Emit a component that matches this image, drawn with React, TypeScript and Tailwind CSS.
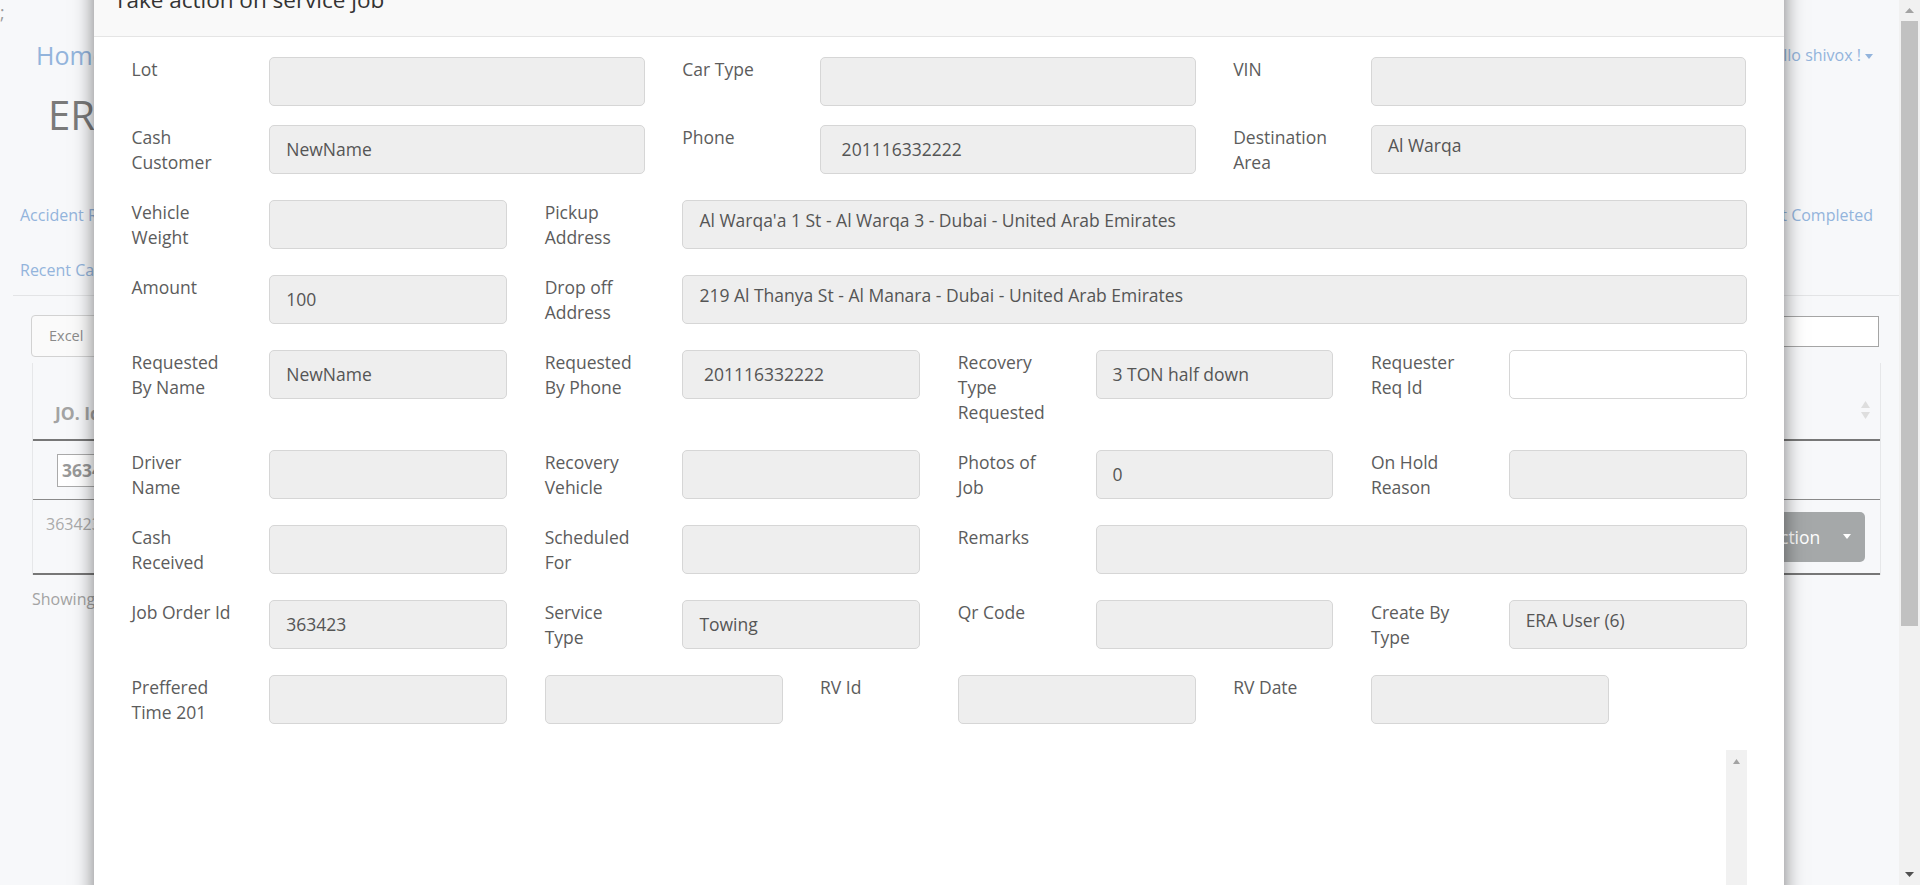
import React from "react";

type Field = {
  lines?: string[];
  value?: string;
  top?: boolean;
  white?: boolean;
  w: string;
};

const rows: Field[][] = [
  [
    { lines: ["Lot"], w: "w-1/3" },
    { lines: ["Car Type"], w: "w-1/3" },
    { lines: ["VIN"], w: "w-1/3" },
  ],
  [
    { lines: ["Cash", "Customer"], value: "NewName", w: "w-1/3" },
    { lines: ["Phone"], value: " 201116332222", w: "w-1/3" },
    { lines: ["Destination", "Area"], value: "Al Warqa", top: true, w: "w-1/3" },
  ],
  [
    { lines: ["Vehicle", "Weight"], w: "w-1/4" },
    {
      lines: ["Pickup", "Address"],
      value: "Al Warqa'a 1 St - Al Warqa 3 - Dubai - United Arab Emirates",
      top: true,
      w: "w-3/4",
    },
  ],
  [
    { lines: ["Amount"], value: "100", w: "w-1/4" },
    {
      lines: ["Drop off", "Address"],
      value: "219 Al Thanya St - Al Manara - Dubai - United Arab Emirates",
      top: true,
      w: "w-3/4",
    },
  ],
  [
    { lines: ["Requested", "By Name"], value: "NewName", w: "w-1/4" },
    { lines: ["Requested", "By Phone"], value: " 201116332222", w: "w-1/4" },
    { lines: ["Recovery", "Type", "Requested"], value: "3 TON half down", w: "w-1/4" },
    { lines: ["Requester", "Req Id"], white: true, w: "w-1/4" },
  ],
  [
    { lines: ["Driver", "Name"], w: "w-1/4" },
    { lines: ["Recovery", "Vehicle"], w: "w-1/4" },
    { lines: ["Photos of", "Job"], value: "0", w: "w-1/4" },
    { lines: ["On Hold", "Reason"], w: "w-1/4" },
  ],
  [
    { lines: ["Cash", "Received"], w: "w-1/4" },
    { lines: ["Scheduled", "For"], w: "w-1/4" },
    { lines: ["Remarks"], w: "w-1/2" },
  ],
  [
    { lines: ["Job Order Id"], value: "363423", w: "w-1/4" },
    { lines: ["Service", "Type"], value: "Towing", w: "w-1/4" },
    { lines: ["Qr Code"], w: "w-1/4" },
    { lines: ["Create By", "Type"], value: "ERA User (6)", top: true, w: "w-1/4" },
  ],
  [
    { lines: ["Preffered", "Time 201"], w: "w-1/4" },
    { w: "w-1/6" },
    { lines: ["RV Id"], w: "w-1/4" },
    { lines: ["RV Date"], w: "w-1/4" },
  ],
];

function FieldCol({ f }: { f: Field }) {
  return (
    <div className={`${f.w} shrink-0 px-[18.75px]`}>
      <div className="flex items-start">
        {f.lines && (
          <div className="w-[137.75px] shrink-0 whitespace-nowrap pb-[6.25px] text-[17.5px] leading-[25px] text-[#5c5c5c]">
            {f.lines.map((l) => (
              <div key={l}>{l}</div>
            ))}
          </div>
        )}
        <div
          className={`h-[49px] min-w-0 flex-1 overflow-hidden whitespace-pre rounded-[5px] border border-[#d6d6d6] px-[16px] text-[17.5px] leading-[25px] text-[#555] ${
            f.top ? "pt-[7px]" : "pt-[11px]"
          } ${f.white ? "bg-white" : "bg-[#eeeeee]"}`}
        >
          {f.value}
        </div>
      </div>
    </div>
  );
}

function Caret({ className = "" }: { className?: string }) {
  return (
    <svg width="8" height="5" viewBox="0 0 8 5" className={className}>
      <path d="M0 0h8L4 5z" fill="currentColor" />
    </svg>
  );
}

function Page() {
  return (
    <div className="w-[1899px] shrink-0">
      <div className="h-[40px] text-[17.5px] leading-[25px] text-[#9a9a9a]">;</div>

      <div className="flex h-[50px] items-start justify-between pl-[36px] pr-[26px]">
        <span className="text-[25px] leading-[30px] text-[#93b4dc]">Home</span>
        <span className="mt-[3px] flex items-center gap-[4px] text-[16px] leading-[25px] text-[#93b4dc]">
          Hello shivox !
          <Caret className="mt-[2px]" />
        </span>
      </div>

      <div className="mt-[2.5px] h-[44px] pl-[48px] text-[40px] leading-[44px] text-[#7a7a7a]">
        ERA Service Jobs
      </div>

      <div className="mt-[66.5px] flex h-[25px] items-start justify-between pl-[20px] pr-[26px] text-[16px] leading-[25px] text-[#93b4dc]">
        <span>Accident Reports</span>
        <span>All Jobs</span>
        <span>Open Jobs</span>
        <span>In Progress</span>
        <span>Completed</span>
        <span>Not Completed</span>
      </div>

      <div className="mt-[30px] h-[25px] pl-[20px] text-[16px] leading-[25px] text-[#93b4dc]">
        Recent Cases
      </div>

      <div className="ml-[13px] mt-[12px] border-t border-[#e3e4e6]" />

      <div className="mt-[19px] flex items-start justify-between pl-[31px] pr-[20px]">
        <div className="h-[42px] rounded-[4px] border border-[#d2d2d2] bg-[#fafafa] px-[17px] text-[14.5px] leading-[40px] text-[#8a8a8a]">
          Excel
        </div>
        <div className="mt-[1px] h-[31px] w-[260px] border border-[#a5a5a5] bg-white" />
      </div>

      <div className="ml-[32px] mr-[18px] mt-[6px] border-x border-[#e6e7e9]">
        <div className="flex h-[78px] items-start justify-between border-b-[2px] border-[#777] pl-[22px] pr-[10px] pt-[37.7px]">
          <span className="text-[17.5px] font-bold leading-[25px] text-[#a3a3a3]">JO. Id</span>
          <svg width="9" height="18" viewBox="0 0 9 18">
            <path d="M4.5 0L9 7H0z" fill="#dedede" />
            <path d="M4.5 18L9 11H0z" fill="#dedede" />
          </svg>
        </div>
        <div className="h-[59px] border-b border-[#8a8a8a] pl-[24px] pt-[13px]">
          <div className="h-[33px] w-[120px] border border-[#aaa] bg-white pl-[4px] text-[17.5px] font-bold leading-[31px] text-[#999]">
            363423
          </div>
        </div>
        <div className="flex h-[75px] items-start justify-between border-b-[2px] border-[#777] pl-[13px] pr-[15px] pt-[12.3px]">
          <span className="text-[16px] leading-[25px] text-[#aaa]">363423</span>
          <div className="flex h-[49.4px] items-center rounded-[5px] bg-[#a5a8a9] pl-[18px] pr-[13.7px] text-[17.5px] text-white">
            Action
            <Caret className="ml-[23px]" />
          </div>
        </div>
      </div>

      <div className="mt-[12px] pl-[32px] text-[16px] leading-[25px] text-[#a3a3a3]">
        Showing 1 to 1 of 1 entries
      </div>
    </div>
  );
}

function PageScrollbar() {
  return (
    <div className="flex w-[21px] shrink-0 flex-col bg-[#f1f1f1]">
      <div className="flex h-[21px] items-center justify-center">
        <svg width="9" height="5" viewBox="0 0 9 5">
          <path d="M0 5L4.5 0L9 5z" fill="#a3a3a3" />
        </svg>
      </div>
      <div className="mx-[2px] h-[605px] bg-[#c1c1c1]" />
      <div className="flex-1" />
      <div className="flex h-[21px] items-center justify-center">
        <svg width="9" height="5" viewBox="0 0 9 5">
          <path d="M0 0L4.5 5L9 0z" fill="#505050" />
        </svg>
      </div>
    </div>
  );
}

function Modal() {
  return (
    <div className="absolute left-[94px] top-[-30px] w-[1690px] bg-white shadow-[0_6px_19px_rgba(0,0,0,0.5)]">
      <div className="border-b border-[#e5e5e5] bg-[#f9f9f9] pb-[24px] pl-[20px] pt-[17px]">
        <h4 className="text-[22.5px] font-medium leading-[25px] text-[#333]">
          Take action on service job
        </h4>
      </div>
      <div className="px-[18.75px] pt-[20px]">
        {rows.map((r, i) => (
          <div key={i} className="mb-[18.75px] flex">
            {r.map((f, j) => (
              <FieldCol key={j} f={f} />
            ))}
          </div>
        ))}
        <div className="px-[18.75px]">
          <div className="flex h-[320px]">
            <div className="flex-1 bg-white" />
            <div className="w-[21px] bg-[#f1f1f1] pt-[9px]">
              <div className="flex justify-center">
                <svg width="7" height="5" viewBox="0 0 7 5">
                  <path d="M0 5L3.5 0L7 5z" fill="#a3a3a3" />
                </svg>
              </div>
            </div>
          </div>
        </div>
      </div>
    </div>
  );
}

export default function App() {
  return (
    <div className="relative flex h-[885px] w-[1920px] overflow-hidden bg-[#f7f8fa] font-['Open_Sans',sans-serif]">
      <Page />
      <PageScrollbar />
      <Modal />
    </div>
  );
}
